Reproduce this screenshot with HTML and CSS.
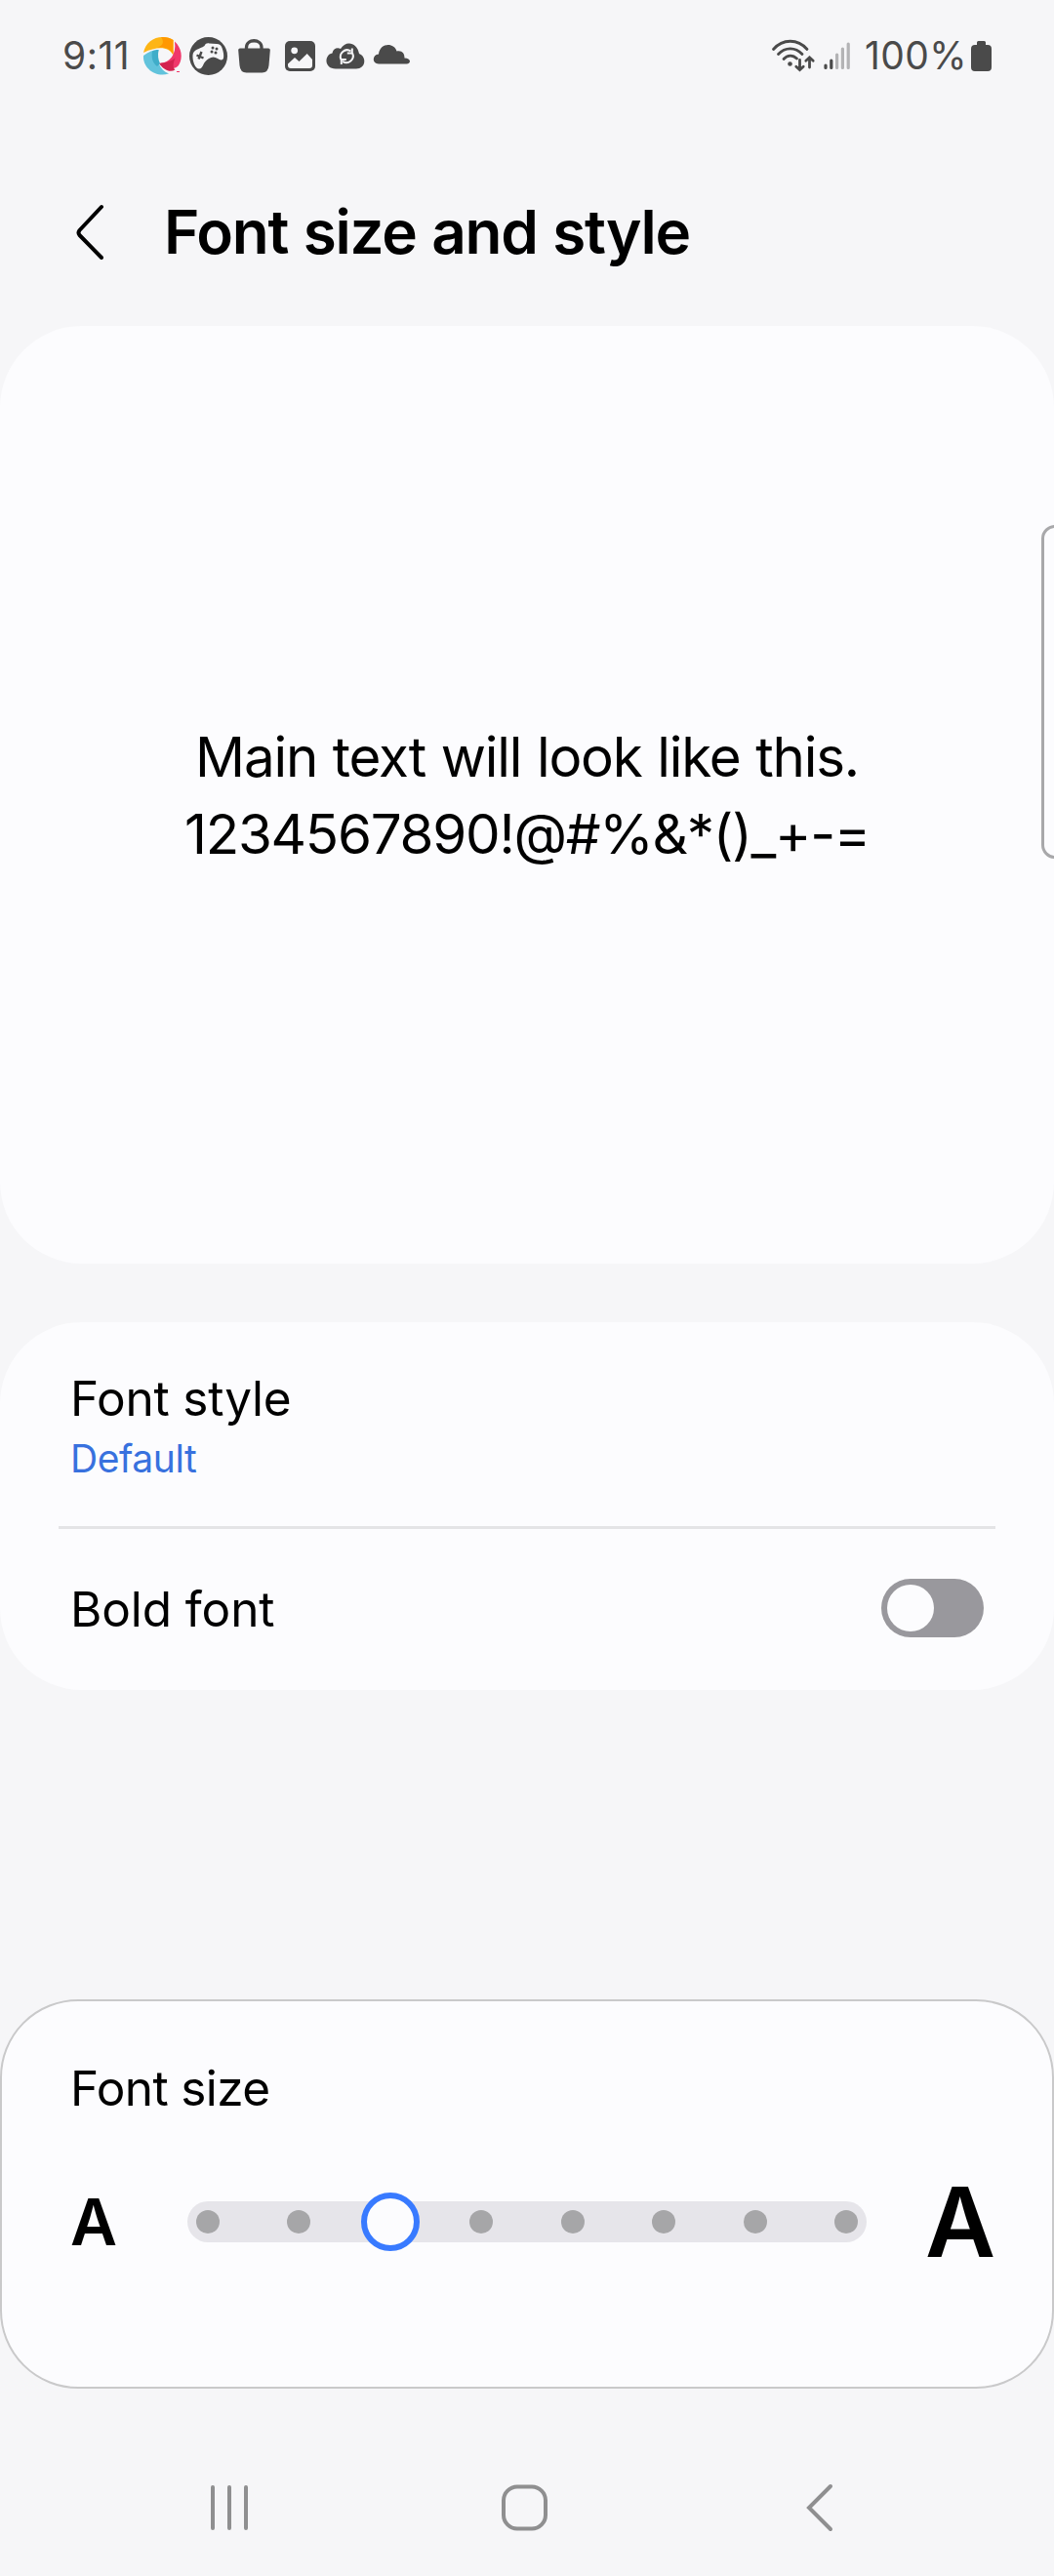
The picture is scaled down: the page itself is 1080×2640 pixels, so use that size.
FILE: index.html
```
<!DOCTYPE html>
<html lang="en">
<head>
<meta charset="utf-8">
<title>Font size and style</title>
<link rel="stylesheet" href="styles.css">
</head>
<body>
<div class="screen">
  <div class="status-bar">
    <span class="clock">9:11</span>
    <div class="notifications">
      <svg width="47" height="47" viewBox="0 0 47 47">
        <path fill="#fdb515" d="M4 20C6 10 14 4 23.500 4c5 0 8 1 11 3v15.500C30 14 19 13 4 20z"/>
        <path fill="#ff9800" d="M22 4c5-.3 9 .8 12.500 3v15.500C32 16 27 14 18 14.500 25 13 25 8 22 4z"/>
        <path fill="#f0386b" d="M36 8.500C43 15 45 25 40 33c-4 5-11 3-19-2 10-1 17-9 15-22.500z"/>
        <path fill="#d3224f" d="M20 31c8-1 12-2 16.500-5.500C34 31 34 36 36.500 37.500 31 41 24 37 20 31z"/>
        <path fill="#62c3dc" d="M4 23c5-4 10-6 15.500-6C17 27 20 38 30 41.500 17 46 3 36 4 23z"/>
        <path fill="#3fadc9" d="M13 18.500c2-1 4-1.500 6.500-1.500-1 6-.5 10 1.500 14l-3 3c-5-4-6-9-5-15.500z"/>
        <path stroke="#f0386b" d="M38 39.500h3"/>
      </svg>
      <svg width="47" height="47" viewBox="0 0 47 47">
        <circle cx="23.500" cy="23.500" r="19.500" fill="#4a4a4a"/>
        <path fill="#f6f6f8" d="M19.500 13c1-2.500 3-3 5-2.500l7.500.5c3 0 4.500 1.500 5.500 4 1.500 4 2 8 1.500 10.500-.5 2.500-3.500 2.500-6 .5-3-2-6-2-9 0-2.500 1.500-4.500 3.500-5.500 6-1 2.500-2.500 4.500-4.500 4.500-4 0-7-8-6.500-14 .5-6 7-6 12-9.500z"/>
        <path stroke="#4a4a4a" stroke-width="2.400" d="m11.500 22.500 7 3m-2-6.500-3 7.500"/>
        <g fill="#4a4a4a"><circle cx="28" cy="15" r="1.500"/><circle cx="32" cy="16" r="1.500"/><circle cx="27" cy="19" r="1.500"/><circle cx="31" cy="20" r="1.500"/></g>
      </svg>
      <svg width="47" height="47" viewBox="0 0 47 47">
        <path fill="none" stroke="#4a4a4a" stroke-width="3.300" d="M15.500 17v-2.500c0-9 15.500-9 15.500 0V17"/>
        <path fill="#4a4a4a" d="M9 15.500h29q2 0 1.800 2L38.500 33q-.7 7.500-7 7.500h-16q-6.300 0-7-7.500L7.200 17.500q-.2-2 1.800-2z"/>
      </svg>
      <svg width="47" height="47" viewBox="0 0 47 47">
        <rect x="8" y="8" width="31" height="31" rx="5" fill="#4a4a4a"/>
        <circle cx="17.700" cy="17.800" r="3.400" fill="#f6f6f8"/>
        <path fill="#f6f6f8" d="M11 31.500 18 25l4.500 4L30.700 21l5.300 6v6q0 3-3 3H14q-3 0-3-3z"/>
      </svg>
      <svg width="47" height="47" viewBox="0 0 47 47">
        <path fill="#4a4a4a" d="M13 36.500C1 36.500 1 22 9.500 20.500c1-5 5-6 8.500-4.500 5-9 17-7 19 5 8 3 7 15.500-3 15.500z"/>
        <g fill="none" stroke="#f6f6f8" stroke-width="2"><path d="M18.500 27A6.800 6.800 0 0 1 28.500 18.500M30.100 20.400A6.800 6.800 0 0 1 20.100 28.900"/><path d="M29.800 15.500v5h-5M18.800 31.900v-5h5"/></g>
      </svg>
      <svg width="47" height="47" viewBox="0 0 47 47">
        <path fill="#4a4a4a" d="M10 31.500c-7 0-7-9.500 0-10C11 9.500 26 9 28.500 18.500c5.500-1 8 2 8 7 7 0 7 6 2 6z"/>
      </svg>
    </div>
    <div class="system">
      <svg class="wifi" width="46" height="36" viewBox="0 0 46 36" fill="none" stroke="#4a4a4a" stroke-width="2.800" stroke-linecap="round">
        <path d="M2.500 11.500C12 .5 27.500.5 37 11.500M7.500 16.500c7-7.500 17.500-7.500 24.500 0M13 21.500c4-4.500 9.500-4.500 13.500-.5"/>
        <circle cx="19.500" cy="26.500" r="2.300" fill="#4a4a4a" stroke="none"/>
        <path d="M29.500 22.500v10m-3.700-3.200 3.700 3.400 3.700-3.400M39.500 30V20m-3.700 3.200 3.700-3.400 3.700 3.400"/>
      </svg>
      <svg class="signal" width="28" height="30" viewBox="0 0 28 30" stroke-width="3.200" stroke-linecap="round">
        <path stroke="#4a4a4a" d="M2 25v2.500M7.800 20v7.500"/>
        <path stroke="#b3b3b5" d="M13.600 14v13.500M19.400 8v19.500M25.200 3v24.500"/>
      </svg>
      <span class="percent">100%</span>
      <svg class="battery" width="21" height="31" viewBox="0 0 21 31"><path fill="#4a4a4a" d="M6 4V1.500Q6 0 7.500 0h6Q15 0 15 1.500V4h2q4 0 4 4v19q0 4-4 4H4q-4 0-4-4V8q0-4 4-4z"/></svg>
    </div>
  </div>

  <header class="header">
    <svg class="back" width="32" height="60" viewBox="0 0 32 60" fill="none" stroke="#000" stroke-width="4" stroke-linecap="round" stroke-linejoin="round"><path d="M28 4 5.500 28q-2 2.500 0 5L28 56"/></svg>
    <h1 class="title">Font size and style</h1>
  </header>

  <section class="card preview">
    <p class="sample sample-text">Main text will look like this.</p>
    <p class="sample sample-digits">1234567890!@#%&amp;*()_+-=</p>
  </section>

  <section class="card options">
    <div class="row row-style">
      <div class="label">Font style</div>
      <div class="value">Default</div>
    </div>
    <div class="divider"></div>
    <div class="row row-bold">
      <div class="label label-bold">Bold font</div>
      <div class="toggle"><div class="knob"></div></div>
    </div>
  </section>

  <section class="card size-card">
    <div class="label label-size">Font size</div>
    <div class="size-row">
      <span class="small-a">A</span>
      <div class="track">
        <i class="dot"></i><i class="dot"></i><i class="dot thumb"></i><i class="dot"></i><i class="dot"></i><i class="dot"></i><i class="dot"></i><i class="dot"></i>
      </div>
      <span class="large-a">A</span>
    </div>
  </section>

  <nav class="nav">
    <svg width="38" height="48" viewBox="0 0 38 48" stroke="#8f8f90" stroke-width="4" stroke-linecap="round"><path d="M2 3v42M19 3v42M36 3v42"/></svg>
    <svg class="home" width="47" height="48" viewBox="0 0 47 48"><rect x="2" y="2.500" width="43" height="43" rx="14" fill="none" stroke="#8f8f90" stroke-width="4"/></svg>
    <svg width="28" height="50" viewBox="0 0 28 50" fill="none" stroke="#8f8f90" stroke-width="4" stroke-linecap="round"><path d="M25 3 3 25l22 22"/></svg>
  </nav>

  <div class="edge-handle"></div>
</div>
</body>
</html>
```
FILE: styles.css
```
* { box-sizing: border-box; }

body {
  margin: 0;
  background: #f6f6f8;
  color: #000;
  font-family: Inter, "Open Sans", sans-serif;
}

svg { display: block; flex: none; }

.screen {
  position: relative;
  width: 1080px;
  height: 2640px;
  overflow: hidden;
  display: flex;
  flex-direction: column;
}

.status-bar {
  height: 114px;
  flex: none;
  display: flex;
  align-items: center;
  padding: 0 64px;
  color: #4a4a4a;
  font-size: 39px;
  line-height: 48px;
}

.clock { width: 79px; letter-spacing: 0.5px; }
.notifications { display: flex; }
.system { display: flex; align-items: center; margin-left: auto; }
.wifi { margin-right: 8px; }
.signal { margin-right: 14px; }
.percent { width: 109px; letter-spacing: 0.4px; }

.header {
  height: 220px;
  flex: none;
  display: flex;
  align-items: center;
  padding: 28px 0 0 76px;
}

.title {
  margin: 0 0 0 60px;
  font-size: 62px;
  font-weight: 600;
  letter-spacing: -1.2px;
  word-spacing: 1px;
  line-height: 80px;
}

.card {
  flex: none;
  background: #fcfcfe;
  border-radius: 84px;
}

.preview {
  height: 961px;
  display: flex;
  flex-direction: column;
  align-items: center;
  justify-content: center;
}

.sample {
  margin: 0;
  font-size: 56.5px;
  line-height: 79px;
  white-space: nowrap;
}

.sample-text { letter-spacing: -1.2px; word-spacing: 1px; }
.sample-digits { letter-spacing: -1.25px; }

.options { height: 377px; margin-top: 60px; }
.row { padding: 0 72px; }
.row-style { height: 209px; padding-top: 45px; }

.label {
  font-size: 49.5px;
  line-height: 66px;
  letter-spacing: -0.2px;
}

.label-bold { letter-spacing: -0.1px; padding-top: 2px; }

.value {
  color: #3871de;
  font-size: 39px;
  line-height: 58px;
  letter-spacing: -0.45px;
}

.divider { height: 3px; margin: 0 60px; background: #e4e4e6; }

.row-bold {
  height: 162px;
  display: flex;
  align-items: center;
  justify-content: space-between;
}

.toggle {
  width: 105px;
  height: 60px;
  padding: 6px;
  border-radius: 30px;
  background: #99989d;
}

.knob { width: 48px; height: 48px; border-radius: 50%; background: #fcfcfe; }

.size-card {
  height: 399px;
  margin-top: 317px;
  padding: 50px 0 0 70px;
  border: 2px solid #c9c9ca;
  border-radius: 80px;
}

.label-size { line-height: 78px; letter-spacing: -0.6px; }

.size-row {
  display: flex;
  align-items: center;
  height: 100px;
  margin-top: 48px;
  font-weight: 600;
}

.small-a { width: 120px; font-size: 66px; line-height: 80px; }
.large-a { margin-left: 60px; font-size: 99px; line-height: 100px; }

.track {
  width: 696px;
  height: 42px;
  padding: 0 9px;
  border-radius: 21px;
  background: #e6e5ea;
  display: flex;
  align-items: center;
  justify-content: space-between;
}

.dot { width: 24px; height: 24px; border-radius: 50%; background: #a6a6a8; }

.thumb {
  width: 60px;
  height: 60px;
  margin: 0 -18px;
  border: 6px solid #387aff;
  background: #fcfcfe;
}

.nav {
  flex: 1;
  display: flex;
  align-items: center;
  padding: 52px 0 0 216px;
}

.home { margin: 0 265px 0 260px; }

.edge-handle {
  position: absolute;
  top: 538px;
  right: -20px;
  width: 33px;
  height: 342px;
  border: 3px solid #a8a8aa;
  border-radius: 14px;
}
```
